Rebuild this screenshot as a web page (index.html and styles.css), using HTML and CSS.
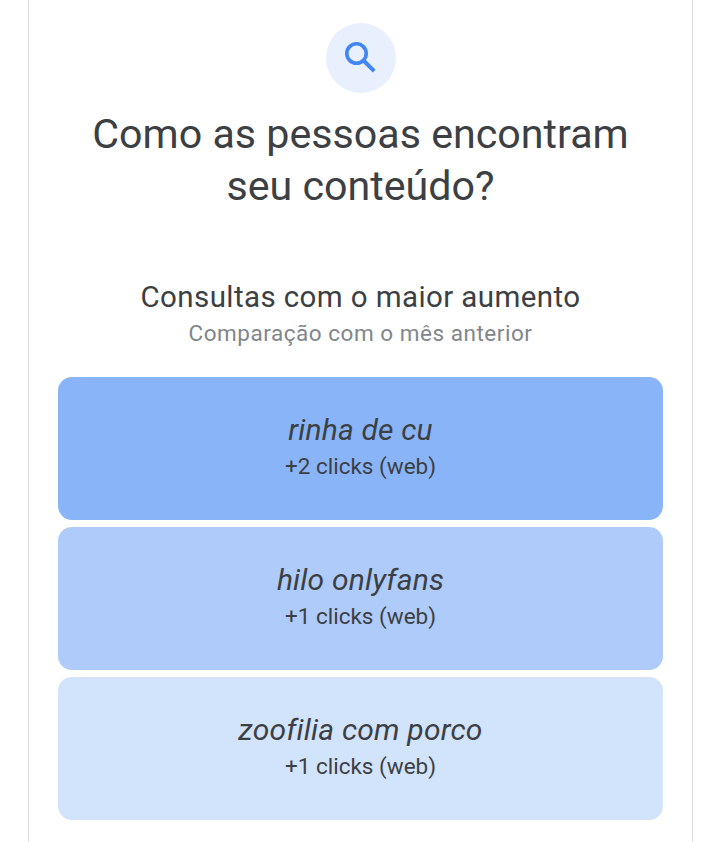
FILE: index.html
```html
<!DOCTYPE html>
<html lang="pt-BR">
<head>
  <meta charset="UTF-8">
  <meta name="viewport" content="width=device-width, initial-scale=1.0">
  <title>Como as pessoas encontram seu conteúdo?</title>
  <link rel="stylesheet" href="styles.css">
</head>
<body>
  <main class="panel">
    <div class="icon">
      <svg viewBox="0 0 42 42" width="42" height="42" fill="none" stroke="#4285f4">
        <circle cx="16.5" cy="16.5" r="9.7" stroke-width="3.6"/>
        <path d="M23 23L34.2 34.2" stroke-width="4"/>
      </svg>
    </div>
    <h1 class="title">Como as pessoas encontram<br>seu conteúdo?</h1>

    <h2 class="subtitle">Consultas com o maior aumento</h2>
    <p class="compare">Comparação com o mês anterior</p>

    <div class="queries">
      <div class="query first">
        <em class="term">rinha de cu</em>
        <span class="clicks">+2 clicks (web)</span>
      </div>
      <div class="query second">
        <em class="term">hilo onlyfans</em>
        <span class="clicks">+1 clicks (web)</span>
      </div>
      <div class="query third">
        <em class="term">zoofilia com porco</em>
        <span class="clicks">+1 clicks (web)</span>
      </div>
    </div>
  </main>
</body>
</html>
```

FILE: styles.css
```css
* {
  box-sizing: border-box;
}

body {
  margin: 0;
  height: 842px;
  overflow: hidden;
  background: #fff;
  color: #3c4043;
  font-family: Roboto, sans-serif;
  text-align: center;
}

.panel {
  width: 665px;
  height: 842px;
  margin-left: 28px;
  padding: 23px 29px 0;
  border: 1px solid #dadce0;
  border-width: 0 1px;
}

.icon {
  display: flex;
  align-items: center;
  justify-content: center;
  width: 70px;
  height: 70px;
  margin: 0 auto;
  border-radius: 50%;
  background: #e8f0fe;
}

.title {
  margin: 15px 0 0;
  font-size: 41.2px;
  font-weight: 400;
  line-height: 52px;
}

.subtitle {
  margin: 65px 0 0;
  font-size: 29.5px;
  font-weight: 400;
  line-height: 40px;
  letter-spacing: 0.4px;
}

.compare {
  margin: 0;
  color: #80868b;
  font-size: 22.5px;
  line-height: 32px;
  letter-spacing: 0.53px;
}

.queries {
  display: flex;
  flex-direction: column;
  gap: 7px;
  margin-top: 28px;
}

.query {
  display: flex;
  flex-direction: column;
  height: 143px;
  padding-top: 33px;
  border-radius: 14px;
}

.first {
  background: #8ab4f8;
}

.second {
  background: #aecbfa;
}

.third {
  background: #d2e3fc;
}

.term {
  font-size: 30px;
  line-height: 40px;
  letter-spacing: 0.18px;
}

.clicks {
  font-size: 22.5px;
  line-height: 32px;
}
```
